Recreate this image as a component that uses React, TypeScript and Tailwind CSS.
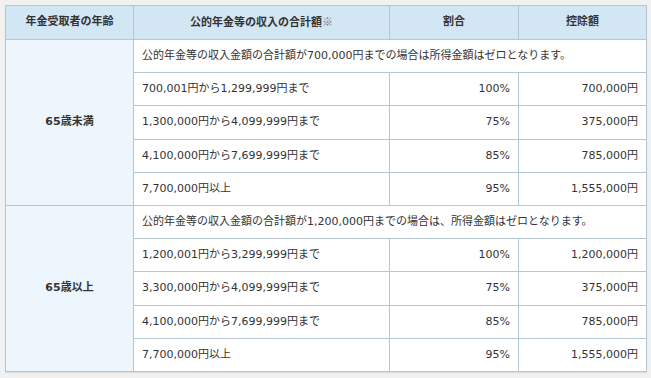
const groups = [
  {
    age: '65歳未満',
    note: '公的年金等の収入金額の合計額が700,000円までの場合は所得金額はゼロとなります。',
    rows: [
      ['700,001円から1,299,999円まで', '100%', '700,000円'],
      ['1,300,000円から4,099,999円まで', '75%', '375,000円'],
      ['4,100,000円から7,699,999円まで', '85%', '785,000円'],
      ['7,700,000円以上', '95%', '1,555,000円'],
    ],
  },
  {
    age: '65歳以上',
    note: '公的年金等の収入金額の合計額が1,200,000円までの場合は、所得金額はゼロとなります。',
    rows: [
      ['1,200,001円から3,299,999円まで', '100%', '1,200,000円'],
      ['3,300,000円から4,099,999円まで', '75%', '375,000円'],
      ['4,100,000円から7,699,999円まで', '85%', '785,000円'],
      ['7,700,000円以上', '95%', '1,555,000円'],
    ],
  },
]

const cell = 'border border-[#b4c6d4] px-2 bg-white'

export default function App() {
  return (
    <div
      className="w-[651px] h-[378px] bg-[#f1f1f1] pt-[5px] pl-[5px] text-[11px] text-[#333]"
      style={{ fontFamily: '"DejaVu Sans", "Noto Sans CJK JP", sans-serif' }}
    >
      <table className="border-collapse w-[641px] table-fixed shadow-[0_1px_1px_rgba(0,0,0,0.08)]">
        <colgroup>
          <col className="w-[128px]" />
          <col className="w-[256px]" />
          <col className="w-[129px]" />
          <col className="w-[128px]" />
        </colgroup>
        <thead>
          <tr className="h-[34px] bg-[#d3e6f3]">
            <th className="border border-[#b4c6d4] font-bold">年金受取者の年齢</th>
            <th className="border border-[#b4c6d4] font-bold">
              公的年金等の収入の合計額
              <span className="font-normal text-[#777] [font-family:'Noto_Sans_CJK_JP',sans-serif]">※</span>
            </th>
            <th className="border border-[#b4c6d4] font-bold">割合</th>
            <th className="border border-[#b4c6d4] font-bold">控除額</th>
          </tr>
        </thead>
        <tbody>
          {groups.map((g) => (
            <>
              <tr key={g.age + 'n'} className="h-[33px]">
                <td rowSpan={5} className="border border-[#b4c6d4] bg-[#eef6fd] text-center font-bold">
                  {g.age}
                </td>
                <td colSpan={3} className={`${cell} whitespace-nowrap`}>{g.note}</td>
              </tr>
              {g.rows.map((r, i) => (
                <tr key={g.age + i} className={i === 1 ? 'h-[34px]' : 'h-[33px]'}>
                  <td className={`${cell} whitespace-nowrap`}>{r[0]}</td>
                  <td className={`${cell} text-right`}>{r[1]}</td>
                  <td className={`${cell} text-right`}>{r[2]}</td>
                </tr>
              ))}
            </>
          ))}
        </tbody>
      </table>
    </div>
  )
}
